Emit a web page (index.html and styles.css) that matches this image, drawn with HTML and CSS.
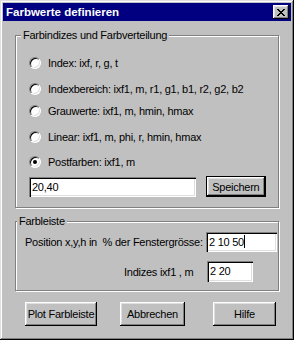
FILE: index.html
```html
<!DOCTYPE html>
<html lang="de">
<head>
    <meta charset="UTF-8">
    <meta name="viewport" content="width=device-width, initial-scale=1.0">
    <title>Farbwerte definieren</title>
    <link rel="stylesheet" href="styles.css">
</head>
<body>
    <div class="window">
        <div class="titlebar">
            <span class="title">Farbwerte definieren</span>
            <button class="close" title="Schließen">
                <svg width="8" height="7" viewBox="0 0 8 7" shape-rendering="crispEdges">
                    <path d="M0 0h2v1h-2zM6 0h2v1h-2zM1 1h2v1h-2zM5 1h2v1h-2zM2 2h4v1h-4zM3 3h2v1h-2zM2 4h4v1h-4zM1 5h2v1h-2zM5 5h2v1h-2zM0 6h2v1h-2zM6 6h2v1h-2z" fill="#000"/>
                </svg>
            </button>
        </div>
        <div class="content">
            <div class="group group-colors">
                <div class="legend">Farbindizes und Farbverteilung</div>
                <label class="option opt-1"><span class="radio"></span>Index: ixf, r, g, t</label>
                <label class="option opt-2"><span class="radio"></span>Indexbereich: ixf1, m, r1, g1, b1, r2, g2, b2</label>
                <label class="option opt-3"><span class="radio"></span>Grauwerte: ixf1, m, hmin, hmax</label>
                <label class="option opt-4"><span class="radio"></span>Linear: ixf1, m, phi, r, hmin, hmax</label>
                <label class="option opt-5"><span class="radio checked"></span>Postfarben: ixf1, m</label>
                <div class="entry-row">
                    <div class="field field-values">20,40</div>
                    <button class="btn btn-default">Speichern</button>
                </div>
            </div>
            <div class="group group-bar">
                <div class="legend">Farbleiste</div>
                <div class="param-row">
                    <span class="param-label">Position x,y,h in &nbsp;% der Fenstergrösse:</span>
                    <div class="field field-pos">2 10 50<span class="caret"></span></div>
                </div>
                <div class="param-row param-indices">
                    <span class="param-label">Indizes ixf1 , m</span>
                    <div class="field field-idx">2 20</div>
                </div>
            </div>
            <div class="actions">
                <button class="btn btn-plot">Plot Farbleiste</button>
                <button class="btn btn-cancel">Abbrechen</button>
                <button class="btn btn-help">Hilfe</button>
            </div>
        </div>
    </div>
</body>
</html>
```

FILE: styles.css
```css
body {
    margin: 0;
    font-family: "Liberation Sans", Arial, sans-serif;
    font-size: 11px;
    letter-spacing: -0.25px;
    color: #000;
    background: #c0c0c0;
    white-space: nowrap;
}
.window {
    width: 294px;
    height: 340px;
    box-sizing: border-box;
    padding: 3px;
    background: #c0c0c0;
    box-shadow: inset -1px -1px #000, inset 1px 1px #dfdfdf, inset -2px -2px #808080, inset 2px 2px #fff;
    display: flex;
    flex-direction: column;
}
.titlebar {
    height: 18px;
    background: #000080;
    color: #fff;
    display: flex;
    align-items: center;
    justify-content: space-between;
    padding: 0 2px 0 3px;
}
.title {
    font-weight: bold;
    font-size: 11.5px;
    letter-spacing: 0;
    line-height: 14px;
}
.close {
    width: 16px;
    height: 14px;
    padding: 0;
    border: none;
    background: #c0c0c0;
    box-shadow: inset -1px -1px #000, inset 1px 1px #fff, inset -2px -2px #808080, inset 2px 2px #dfdfdf;
    display: flex;
    align-items: center;
    justify-content: center;
}
.close svg {
    display: block;
    margin: 0 0 0 -1px;
}
.content {
    padding: 14px 12px 0 12px;
}
.group {
    border: 1px solid #808080;
    box-shadow: inset 1px 1px #fff, 1px 1px #fff;
    padding: 0 12px 0 13px;
}
.legend {
    width: fit-content;
    margin: -7px 0 0 -8px;
    padding: 0 2px;
    background: #c0c0c0;
    line-height: 13px;
}
.group-colors {
    height: 173px;
    box-sizing: border-box;
}
.option {
    display: flex;
    align-items: center;
    gap: 7px;
    height: 14px;
    line-height: 14px;
}
.opt-1 { margin-top: 14px; }
.opt-2 { margin-top: 12px; }
.opt-3 { margin-top: 8px; }
.opt-4 { margin-top: 12px; }
.opt-5 { margin-top: 11px; }
.radio {
    width: 12px;
    height: 12px;
    box-sizing: border-box;
    border-radius: 50%;
    background: #fff;
    border: 1px solid;
    border-color: #808080 #fff #fff #808080;
    box-shadow: inset 1px 1px #000, inset -1px -1px #dfdfdf;
    position: relative;
    flex: none;
}
.radio.checked::after {
    content: "";
    position: absolute;
    left: 3px;
    top: 3px;
    width: 4px;
    height: 4px;
    border-radius: 50%;
    background: #000;
}
.entry-row {
    display: flex;
    align-items: flex-end;
    gap: 10px;
    margin-top: 7px;
}
.field {
    box-sizing: border-box;
    background: #fff;
    box-shadow: inset 1px 1px #808080, inset 2px 2px #000, inset -1px -1px #fff, inset -2px -2px #dfdfdf;
    padding: 0 3px;
    line-height: 20px;
    height: 20px;
}
.field-values {
    width: 174px;
}
.btn {
    font-family: inherit;
    font-size: 11px;
    letter-spacing: -0.25px;
    color: #000;
    background: #c0c0c0;
    border: none;
    padding: 0;
    white-space: nowrap;
    box-shadow: inset -1px -1px #000, inset 1px 1px #fff, inset -2px -2px #808080, inset 2px 2px #dfdfdf;
}
.btn-default {
    width: 63px;
    height: 21px;
    border: 1px solid #000;
}
.group-bar {
    margin-top: 13px;
    height: 70px;
    box-sizing: border-box;
    padding: 0 1px 0 9px;
}
.param-row {
    display: flex;
    align-items: center;
    justify-content: space-between;
}
.param-row:nth-of-type(2) {
    margin-top: 4px;
}
.param-indices {
    justify-content: flex-start;
    margin-top: 9px;
    padding-left: 99px;
}
.param-indices .param-label {
    width: 83px;
}
.field-pos {
    width: 71px;
}
.field-idx {
    width: 46px;
    height: 21px;
}
.caret {
    display: inline-block;
    width: 1px;
    height: 13px;
    background: #000;
    vertical-align: -2px;
}
.actions {
    display: flex;
    margin-top: 11px;
    padding-left: 10px;
}
.actions .btn {
    height: 24px;
}
.btn-plot { width: 72px; }
.btn-cancel { width: 65px; margin-left: 23px; }
.btn-help { width: 63px; margin-left: 28px; }
```
